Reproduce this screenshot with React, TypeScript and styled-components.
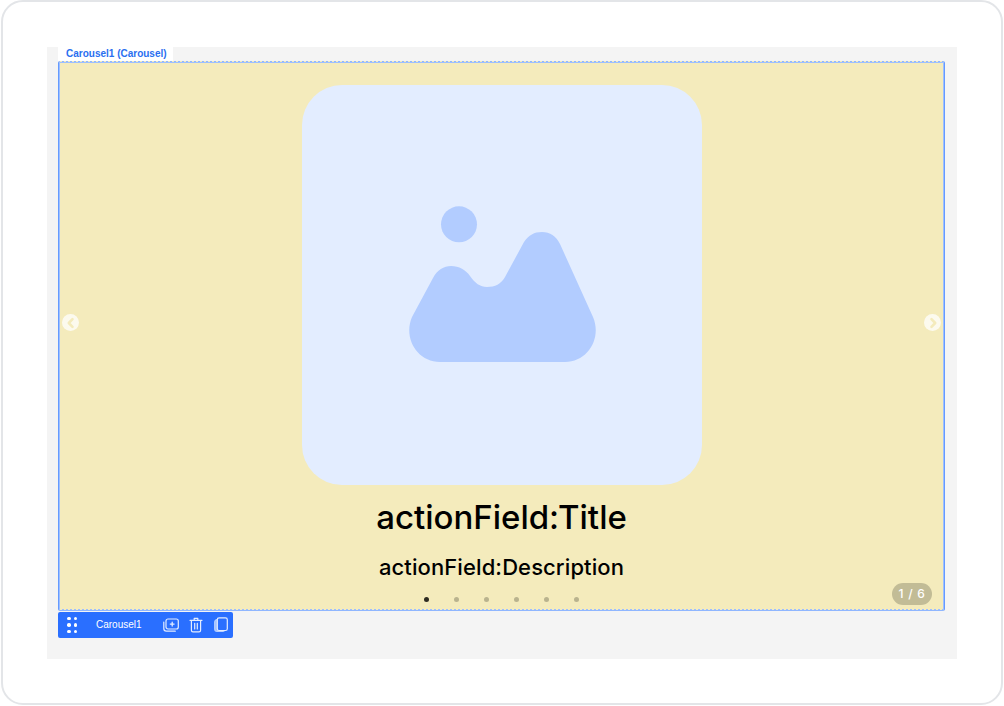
import React from "react";
import styled, { createGlobalStyle } from "styled-components";

const Global = createGlobalStyle`
  html, body { margin: 0; padding: 0; background: #fff; }
  #root { width: 1004px; height: 706px; }
`;

const Frame = styled.div`
  box-sizing: border-box;
  width: 1002px;
  height: 705px;
  margin: 0 0 0 1px;
  border: 2px solid #e3e5e8;
  border-radius: 22px;
  padding: 45px 0 0 44px;
  background: #fff;
  font-family: "Liberation Sans", Arial, sans-serif;
`;

const Canvas = styled.div`
  width: 910px;
  height: 612px;
  padding-left: 11px;
  box-sizing: border-box;
  background: #f4f4f4;
  display: flex;
  flex-direction: column;
  align-items: flex-start;
`;

const NameTab = styled.div`
  width: 115px;
  height: 14px;
  box-sizing: border-box;
  padding-left: 8px;
  background: #fff;
  color: #2a6ff0;
  font-size: 10px;
  font-weight: 700;
  line-height: 13px;
  white-space: nowrap;
`;

const Carousel = styled.div`
  position: relative;
  box-sizing: border-box;
  width: 887px;
  height: 550px;
  padding-top: 23px;
  background: #f4ebbc;
  border: 1px solid #8fb6ff;
  border-left-color: #659aff;
  border-right-color: #659aff;
  box-shadow: inset 0 0 0 1px #9dbfff;
  border-radius: 2px;
  display: flex;
  flex-direction: column;
  align-items: center;

  &::before,
  &::after {
    content: "";
    position: absolute;
    left: 1px;
    right: 1px;
    height: 1px;
    background: repeating-linear-gradient(90deg, #f4ebbc 0 2px, transparent 2px 4px);
  }
  &::before {
    top: -1px;
  }
  &::after {
    bottom: 0;
  }
`;

const Picture = styled.div`
  width: 400px;
  height: 400px;
  flex: none;
  border-radius: 40px;
  background: #e3edff;
  display: flex;
  align-items: center;
  justify-content: center;
`;

const Title = styled.div`
  margin-top: 9px;
  font-family: Inter, "Noto Sans", sans-serif;
  font-size: 33px;
  font-weight: 500;
  line-height: 46px;
  color: #000;
  white-space: nowrap;
`;

const Description = styled.div`
  margin-top: 11px;
  font-family: Inter, "Noto Sans", sans-serif;
  font-size: 22px;
  font-weight: 500;
  letter-spacing: 0.1px;
  line-height: 32px;
  color: #000;
  white-space: nowrap;
`;

const Dots = styled.div`
  margin-top: 14px;
  display: flex;
  gap: 25px;
`;

const Dot = styled.span<{ $active?: boolean }>`
  width: 5px;
  height: 5px;
  border-radius: 50%;
  background: ${(p) => (p.$active ? "#2e2c22" : "#b9b38e")};
`;

const Arrow = styled.div<{ $side: "left" | "right" }>`
  position: absolute;
  top: 252px;
  ${(p) => (p.$side === "left" ? "left: 3px;" : "right: 3px;")}
  width: 17px;
  height: 17px;
  border-radius: 50%;
  background: rgba(255, 255, 255, 0.75);
  display: flex;
  align-items: center;
  justify-content: center;
`;

const Counter = styled.div`
  position: absolute;
  right: 12px;
  bottom: 5px;
  width: 40px;
  height: 22px;
  border-radius: 11px;
  background: #c2bc96;
  color: #fff;
  font-family: Inter, "Noto Sans", sans-serif;
  font-size: 12px;
  font-weight: 500;
  letter-spacing: 0.7px;
  line-height: 22px;
  text-align: center;
  white-space: nowrap;
`;

const Toolbar = styled.div`
  margin-top: 1px;
  box-sizing: border-box;
  width: 175px;
  height: 26px;
  padding-left: 9px;
  background: #2a6fff;
  border-radius: 2px;
  display: flex;
  align-items: center;
  color: #fff;
`;

const Grip = styled.div`
  display: grid;
  grid-template-columns: 3.5px 3.5px;
  grid-auto-rows: 3.5px;
  column-gap: 3px;
  row-gap: 3px;
`;

const GripDot = styled.span`
  width: 3.5px;
  height: 3.5px;
  border-radius: 50%;
  background: #fff;
`;

const ToolName = styled.div`
  width: 67px;
  margin-left: 19px;
  font-size: 10px;
  line-height: 14px;
  white-space: nowrap;
`;

const ToolIcons = styled.div`
  display: flex;
  align-items: center;
  gap: 9px;
`;

const ToolIcon = styled.svg`
  width: 16px;
  height: 16px;
  flex: none;
  fill: none;
  stroke: #e4edff;
  stroke-width: 1.2;
  stroke-linejoin: round;
  stroke-linecap: round;
`;

const Chevron = ({ dir }: { dir: "left" | "right" }) => (
  <svg width="12" height="12" viewBox="0 0 12 12" fill="none" stroke="#f4ebbc" strokeWidth="2.6" strokeLinecap="round" strokeLinejoin="round">
    <path d={dir === "left" ? "M7.500 2.200 3.800 6l3.700 3.800" : "M4.500 2.200 8.200 6l-3.700 3.800"} />
  </svg>
);

export default function App() {
  return (
    <>
      <Global />
      <Frame>
        <Canvas>
          <NameTab>Carousel1 (Carousel)</NameTab>
          <Carousel>
            <Arrow $side="left"><Chevron dir="left" /></Arrow>
            <Picture>
              <svg width="188" height="160" viewBox="8 15 188 160" fill="#b2ccff">
                <circle cx="59" cy="34.3" r="18" />
                <path d="M40 172C17 172 3 148 12 127L33 88C37 80 44 76 51 76C59 76 66 80 70 86C75 93 80 97 87 97C95 97 101 94 105 87L124 52C129 45 134 42 142 42C150 42 156 46 160 54L193 127C202 148 188 172 165 172Z" />
              </svg>
            </Picture>
            <Title>actionField:Title</Title>
            <Description>actionField:Description</Description>
            <Dots>
              <Dot $active />
              <Dot />
              <Dot />
              <Dot />
              <Dot />
              <Dot />
            </Dots>
            <Arrow $side="right"><Chevron dir="right" /></Arrow>
            <Counter>1 / 6</Counter>
          </Carousel>
          <Toolbar>
            <Grip>
              {[0, 1, 2, 3, 4, 5].map((i) => (
                <GripDot key={i} />
              ))}
            </Grip>
            <ToolName>Carousel1</ToolName>
            <ToolIcons>
              <ToolIcon viewBox="0 0 16 16">
                <rect x="3" y="2" width="12.300" height="10" rx="2" />
                <path d="M.8 5v6.500c0 1.500 1 2.700 2.500 2.700h9" />
                <path d="M9.200 5.200v3.800M7.300 7.100h3.800" strokeWidth="1.300" />
              </ToolIcon>
              <ToolIcon viewBox="0 0 16 16">
                <path d="M2 3.300h12M6.200 3.300V1.300h3.600v2M3.400 3.300v10c0 1 .6 1.600 1.600 1.600h6c1 0 1.600-.6 1.600-1.600v-10" />
                <path d="M6.700 6.300v5.700M9.300 6.300v5.700" />
              </ToolIcon>
              <ToolIcon viewBox="0 0 16 16">
                <path d="M3.500 2.500C2.300 3 1.700 4 1.700 5v7c0 1.200 1 2.300 2.300 2.300h6c.8 0 1.500-.4 1.800-1" fill="#9dbcff" stroke="#b8d0ff" />
                <rect x="4.300" y=".9" width="10" height="12.600" rx="1.800" fill="#2a6fff" />
              </ToolIcon>
            </ToolIcons>
          </Toolbar>
        </Canvas>
      </Frame>
    </>
  );
}
